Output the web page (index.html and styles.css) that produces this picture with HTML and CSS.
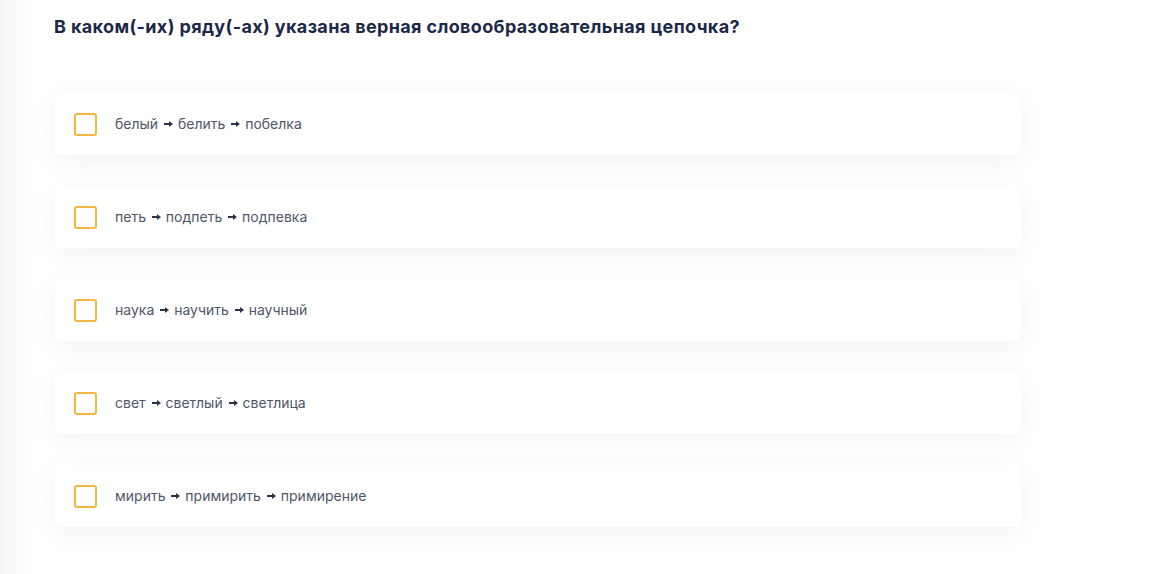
FILE: index.html
```html
<!DOCTYPE html>
<html lang="ru">
<head>
    <meta charset="UTF-8">
    <title>Тест</title>
    <link rel="stylesheet" href="styles.css">
</head>
<body>
    <div class="page">
        <!-- Вопрос -->
        <h1 class="question">В каком(-их) ряду(-ах) указана верная словообразовательная цепочка?</h1>

        <!-- Варианты ответа -->
        <div class="answers">
            <label class="answer">
                <span class="checkbox"></span>
                <span class="answer-text">белый <i class="arrow"></i> белить <i class="arrow"></i> побелка</span>
            </label>
            <label class="answer">
                <span class="checkbox"></span>
                <span class="answer-text">петь <i class="arrow"></i> подпеть <i class="arrow"></i> подпевка</span>
            </label>
            <label class="answer">
                <span class="checkbox"></span>
                <span class="answer-text">наука <i class="arrow"></i> научить <i class="arrow"></i> научный</span>
            </label>
            <label class="answer">
                <span class="checkbox"></span>
                <span class="answer-text">свет <i class="arrow"></i> светлый <i class="arrow"></i> светлица</span>
            </label>
            <label class="answer">
                <span class="checkbox"></span>
                <span class="answer-text">мирить <i class="arrow"></i> примирить <i class="arrow"></i> примирение</span>
            </label>
        </div>
    </div>
</body>
</html>
```

FILE: styles.css
```css
* {
    margin: 0;
    padding: 0;
    box-sizing: border-box;
}

body {
    font-family: Inter, "Noto Sans", sans-serif;
    background: linear-gradient(90deg, #f6f6f6 0, #fcfcfc 20px, #ffffff 40px);
    height: 100vh;
    overflow: hidden;
}

.page {
    padding: 16px 0 0 54px;
    width: 1021px;
}

/* Вопрос */
.question {
    font-size: 18px;
    font-weight: 700;
    color: #1c2946;
    line-height: 22px;
    letter-spacing: 0.36px;
}

/* Варианты */
.answers {
    display: flex;
    flex-direction: column;
    gap: 31px;
    margin-top: 55px;
    margin-left: 1px;
}

.answer {
    display: flex;
    align-items: center;
    gap: 18px;
    height: 62px;
    padding-left: 19px;
    background: #ffffff;
    border-radius: 6px;
    box-shadow: 0 6px 28px rgba(0, 0, 0, 0.055);
    cursor: pointer;
}

.checkbox {
    width: 23px;
    height: 23px;
    border: 2px solid #f2b740;
    border-radius: 3px;
    flex-shrink: 0;
}

.answer-text {
    font-size: 14px;
    color: #50566a;
    letter-spacing: 0;
    position: relative;
    top: -1px;
}

/* Стрелка */
.arrow {
    display: inline-block;
    position: relative;
    width: 6px;
    height: 2px;
    background: #2c3347;
    vertical-align: middle;
    margin: 0 4px 0 2px;
    top: -1px;
}

.arrow::after {
    content: "";
    position: absolute;
    right: -3px;
    top: -2px;
    border-left: 4px solid #2c3347;
    border-top: 3px solid transparent;
    border-bottom: 3px solid transparent;
}
```
